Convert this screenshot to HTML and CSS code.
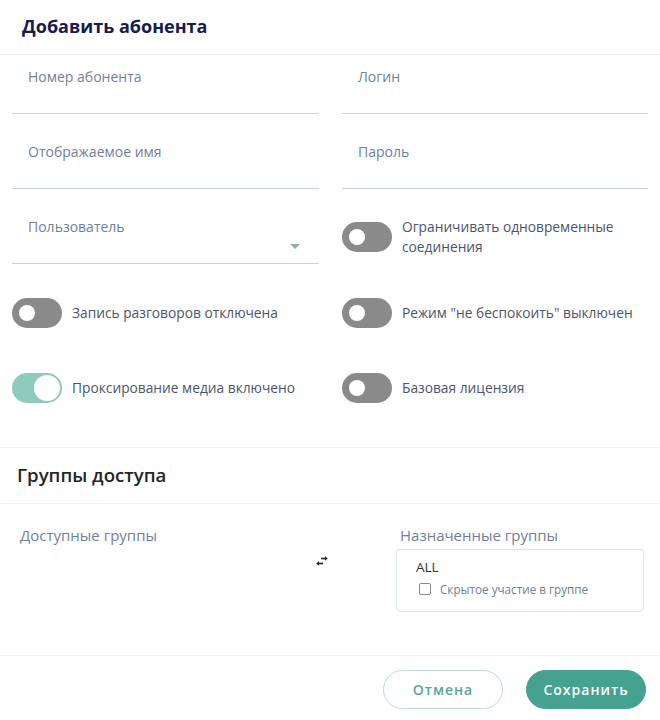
FILE: index.html
```html
<!DOCTYPE html>
<html lang="ru">
<head>
<meta charset="utf-8">
<title>Добавить абонента</title>
<link rel="stylesheet" href="styles.css">
</head>
<body>
<div class="dialog">
  <div class="dialog-header">
    <h1 class="dialog-title">Добавить абонента</h1>
  </div>

  <div class="form">
    <div class="field"><div class="field-label">Номер абонента</div></div>
    <div class="field right"><div class="field-label">Логин</div></div>
    <div class="field"><div class="field-label">Отображаемое имя</div></div>
    <div class="field right"><div class="field-label">Пароль</div></div>
    <div class="field select">
      <div class="field-label">Пользователь</div>
      <span class="select-arrow"></span>
    </div>
    <div class="toggle-row top">
      <span class="switch"><span class="knob"></span></span>
      <span class="toggle-text">Ограничивать одновременные соединения</span>
    </div>
  </div>

  <div class="toggles">
    <div class="toggle-row">
      <span class="switch"><span class="knob"></span></span>
      <span class="toggle-text">Запись разговоров отключена</span>
    </div>
    <div class="toggle-row">
      <span class="switch"><span class="knob"></span></span>
      <span class="toggle-text">Режим "не беспокоить" выключен</span>
    </div>
    <div class="toggle-row">
      <span class="switch on"><span class="knob"></span></span>
      <span class="toggle-text">Проксирование медиа включено</span>
    </div>
    <div class="toggle-row">
      <span class="switch"><span class="knob"></span></span>
      <span class="toggle-text">Базовая лицензия</span>
    </div>
  </div>

  <div class="section-header">
    <h2 class="section-title">Группы доступа</h2>
  </div>

  <div class="groups">
    <div class="groups-col available">
      <div class="groups-label">Доступные группы</div>
    </div>
    <div class="groups-swap">
      <svg width="14" height="12" viewBox="0 0 14 12" aria-hidden="true">
        <path d="M6 3.5H11" stroke="#222" stroke-width="1.6" fill="none"/>
        <path d="M10 1.2L12.8 3.5L10 5.8Z" fill="#222"/>
        <path d="M3 8.5H8" stroke="#222" stroke-width="1.6" fill="none"/>
        <path d="M4 6.2L1.2 8.5L4 10.8Z" fill="#222"/>
      </svg>
    </div>
    <div class="groups-col assigned">
      <div class="groups-label pad">Назначенные группы</div>
      <div class="group-box">
        <div class="group-name">ALL</div>
        <label class="group-check"><span class="checkbox"></span>Скрытое участие в группе</label>
      </div>
    </div>
  </div>

  <div class="dialog-footer">
    <button class="btn btn-outline">Отмена</button>
    <button class="btn btn-primary">Сохранить</button>
  </div>
</div>
</body>
</html>
```

FILE: styles.css
```css
* { box-sizing: border-box; }

body {
  margin: 0;
  background: #ffffff;
  font-family: "Open Sans", "Noto Sans", sans-serif;
  color: #333;
}

.dialog {
  width: 660px;
}

.dialog-header {
  height: 55px;
  padding-left: 22px;
  display: flex;
  align-items: center;
  border-bottom: 1px solid #f0f0f0;
}

.dialog-title {
  margin: 0 0 2px;
  font-size: 18px;
  font-weight: 700;
  color: #161c4f;
}

.form {
  display: grid;
  grid-template-columns: 307px 306px;
  column-gap: 23px;
  row-gap: 28px;
  padding: 12px 12px 0;
}

.field {
  position: relative;
  height: 47px;
  border-bottom: 1px solid #c9d2de;
  padding-left: 16px;
}

.field-label {
  font-size: 14px;
  line-height: 20px;
  color: #6f8199;
}

.select-arrow {
  position: absolute;
  right: 19px;
  bottom: 14px;
  width: 0;
  height: 0;
  border-left: 5px solid transparent;
  border-right: 5px solid transparent;
  border-top: 5px solid #9aa9bc;
}

.toggles {
  display: grid;
  grid-template-columns: 307px 306px;
  column-gap: 23px;
  row-gap: 45px;
  padding: 34px 12px 44px;
  border-bottom: 1px solid #f0f0f0;
}

.toggle-row {
  display: flex;
  align-items: center;
  gap: 10px;
}

.toggle-row.top {
  align-items: flex-start;
}

.toggle-row.top .switch {
  margin-top: 5px;
}

.toggle-text {
  font-size: 13.75px;
  line-height: 20px;
  color: #4a5668;
}

.switch {
  position: relative;
  flex: none;
  width: 50px;
  height: 30px;
  border-radius: 15px;
  background: #8a8a8a;
}

.switch .knob {
  position: absolute;
  left: 7px;
  top: 7px;
  width: 16px;
  height: 16px;
  border-radius: 50%;
  background: #ffffff;
}

.switch.on {
  background: #8ecbbd;
}

.switch.on .knob {
  left: 22px;
  top: 2px;
  width: 26px;
  height: 26px;
}

.section-header {
  height: 56px;
  padding-left: 17px;
  display: flex;
  align-items: center;
  border-bottom: 1px solid #f0f0f0;
}

.section-title {
  margin: 0 0 2px;
  font-size: 18.6px;
  font-weight: 600;
  color: #252525;
}

.groups {
  display: flex;
  padding: 21px 16px 43px 20px;
  border-bottom: 1px solid #f0f0f0;
}

.groups-col.available {
  width: 284px;
}

.groups-swap {
  width: 36px;
  display: flex;
  justify-content: center;
  padding-top: 30px;
}

.groups-col.assigned {
  margin-left: 56px;
  width: 248px;
}

.groups-label {
  font-size: 15px;
  line-height: 20px;
  color: #6f8199;
}

.groups-label.pad {
  padding-left: 4px;
}

.group-box {
  margin-top: 4px;
  height: 63px;
  border: 1px solid #dde5ee;
  border-radius: 4px;
  padding: 8px 0 0 19px;
}

.group-name {
  font-size: 13.5px;
  line-height: 18px;
  color: #333;
}

.group-check {
  display: flex;
  align-items: center;
  margin-top: 6px;
  margin-left: 3px;
  font-size: 11.7px;
  line-height: 14px;
  color: #6f8199;
}

.checkbox {
  width: 12px;
  height: 12px;
  border: 1.5px solid #8a8a8a;
  border-radius: 2px;
  margin-right: 9px;
}

.dialog-footer {
  display: flex;
  justify-content: flex-end;
  gap: 23px;
  padding: 14px 14px 0;
}

.btn {
  width: 120px;
  height: 39px;
  border-radius: 20px;
  font-family: "Open Sans", "Noto Sans", sans-serif;
  font-size: 14px;
  font-weight: 600;
  letter-spacing: 1px;
  cursor: pointer;
}

.btn-outline {
  background: #fff;
  border: 1px solid #bddad5;
  color: #58a797;
}

.btn-primary {
  background: #45a190;
  border: 1px solid #45a190;
  color: #fff;
}
```
